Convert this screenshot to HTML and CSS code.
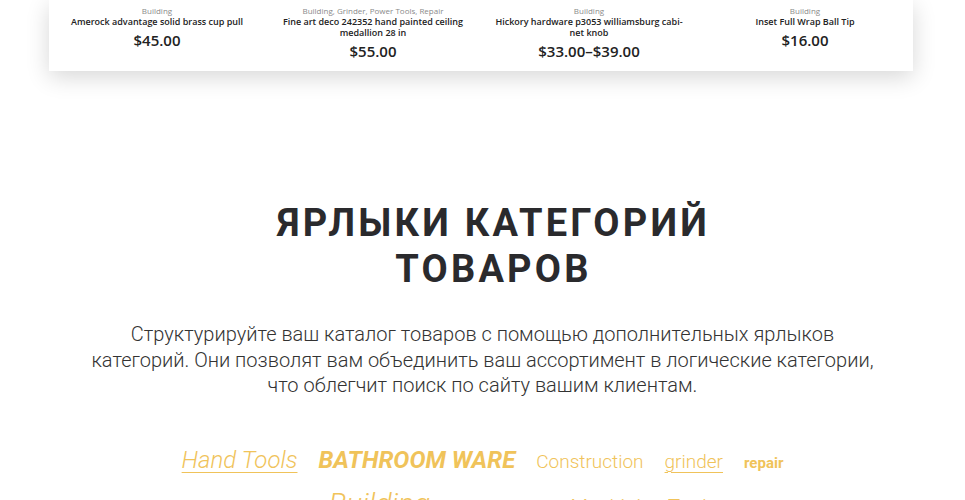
FILE: index.html
```html
<!DOCTYPE html>
<html lang="ru">
<head>
  <meta charset="UTF-8" />
  <title>Ярлыки категорий товаров</title>
  <link rel="stylesheet" href="styles.css">
</head>
<body>
  <div class="products">
    <div class="product">
      <div class="cats">Building</div>
      <div class="name">Amerock advantage solid brass cup pull</div>
      <div class="price">$45.00</div>
    </div>
    <div class="product">
      <div class="cats">Building, Grinder, Power Tools, Repair</div>
      <div class="name">Fine art deco 242352 hand painted ceiling medallion 28 in</div>
      <div class="price">$55.00</div>
    </div>
    <div class="product">
      <div class="cats">Building</div>
      <div class="name">Hickory hardware p3053 williamsburg cabi-<br>net knob</div>
      <div class="price">$33.00&ndash;$39.00</div>
    </div>
    <div class="product">
      <div class="cats">Building</div>
      <div class="name">Inset Full Wrap Ball Tip</div>
      <div class="price">$16.00</div>
    </div>
  </div>

  <div class="section">
    <h2>Ярлыки категорий<br>товаров</h2>
    <p class="lead">Структурируйте ваш каталог товаров с помощью дополнительных ярлыков категорий. Они позволят вам объединить ваш ассортимент в логические категории, что облегчит поиск по сайту вашим клиентам.</p>

    <div class="tags">
      <a class="tag t-hand" href="#">Hand Tools</a>
      <a class="tag t-bath" href="#">BATHROOM WARE</a>
      <a class="tag t-constr" href="#">Construction</a>
      <a class="tag t-grinder" href="#">grinder</a>
      <a class="tag t-repair" href="#">repair</a>
    </div>
    <div class="tags tags-2">
      <a class="tag t-tiny" href="#">mowers</a>
      <a class="tag t-building" href="#">Building</a>
      <a class="tag t-small" href="#">rotary saws</a>
      <a class="tag t-machining" href="#">Machining Tools</a>
    </div>
  </div>
</body>
</html>
```

FILE: styles.css
```css
body {
  margin: 0;
  background: #fff;
  font-family: Roboto, "Liberation Sans", sans-serif;
  color: #2b2b2e;
  overflow: hidden;
}

.products {
  width: 864px;
  margin: 0 auto 0 49px;
  display: grid;
  grid-template-columns: repeat(4, 1fr);
  background: #fff;
  padding: 5px 0 10px;
  box-shadow: 0 6px 22px rgba(0, 0, 0, 0.16);
}

.product {
  text-align: center;
  padding: 0 8px;
  font-family: "Open Sans", sans-serif;
}

.cats {
  font-size: 8px;
  color: #8a8a8a;
  line-height: 11px;
}

.name {
  font-size: 9px;
  font-weight: 600;
  color: #222;
  line-height: 11px;
}

.price {
  font-size: 15px;
  font-weight: 600;
  color: #222;
  margin-top: 4px;
  line-height: 19px;
}

.section {
  text-align: center;
  padding-top: 129px;
}

h2 {
  margin: 0;
  padding-left: 22px;
  font-size: 38px;
  font-weight: 700;
  letter-spacing: 3.2px;
  line-height: 46px;
  text-transform: uppercase;
  color: #2a2a2d;
}

.lead {
  width: 800px;
  margin: 30px auto 0;
  font-size: 20px;
  font-weight: 300;
  line-height: 25.5px;
  color: #333;
}

.tags {
  display: flex;
  justify-content: center;
  align-items: baseline;
  gap: 21px;
}

.tags:first-of-type {
  margin-top: 45px;
}

.tags-2 {
  gap: 22px;
  margin-top: 9px;
}

.tag {
  color: #f0c35a;
  text-decoration: none;
  line-height: 32px;
}

.t-hand {
  font-size: 24px;
  font-weight: 300;
  font-style: italic;
  text-decoration: underline;
  text-decoration-thickness: 1px;
  text-underline-offset: 4px;
}

.t-bath {
  font-size: 24px;
  font-weight: 700;
  font-style: italic;
}

.t-constr {
  font-size: 19px;
  font-weight: 300;
}

.t-grinder {
  font-size: 19px;
  font-weight: 300;
  text-decoration: underline;
  text-decoration-thickness: 1px;
  text-underline-offset: 4px;
}

.t-repair {
  font-size: 15px;
  font-weight: 700;
}

.t-building {
  font-size: 30px;
  font-weight: 300;
  font-style: italic;
}

.t-tiny {
  font-size: 16px;
  font-weight: 300;
}

.t-small {
  font-size: 18.5px;
  font-weight: 300;
}

.t-machining {
  font-size: 21px;
  font-weight: 300;
  font-style: italic;
}
```
